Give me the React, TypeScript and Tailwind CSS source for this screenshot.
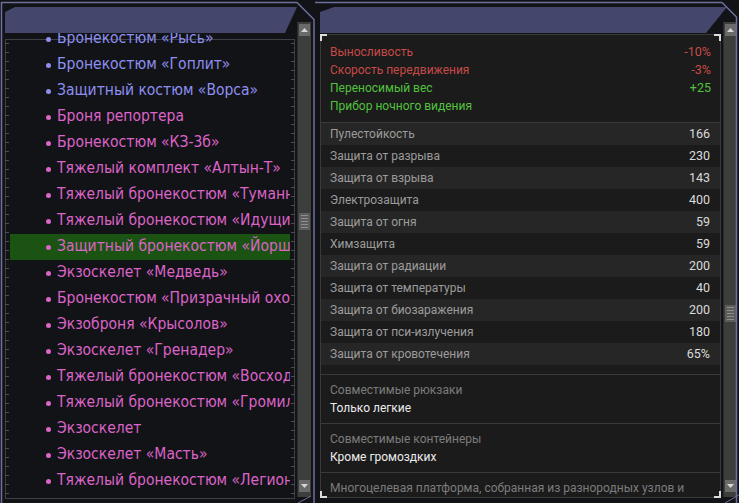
import React from "react";

type Item = { name: string; blue?: boolean; selected?: boolean };

const items: Item[] = [
  { name: "Бронекостюм «Рысь»", blue: true },
  { name: "Бронекостюм «Гоплит»", blue: true },
  { name: "Защитный костюм «Ворса»", blue: true },
  { name: "Броня репортера" },
  { name: "Бронекостюм «КЗ-3б»" },
  { name: "Тяжелый комплект «Алтын-Т»" },
  { name: "Тяжелый бронекостюм «Туманность»" },
  { name: "Тяжелый бронекостюм «Идущий»" },
  { name: "Защитный бронекостюм «Йорш»", selected: true },
  { name: "Экзоскелет «Медведь»" },
  { name: "Бронекостюм «Призрачный охотник»" },
  { name: "Экзоброня «Крысолов»" },
  { name: "Экзоскелет «Гренадер»" },
  { name: "Тяжелый бронекостюм «Восход»" },
  { name: "Тяжелый бронекостюм «Громила»" },
  { name: "Экзоскелет" },
  { name: "Экзоскелет «Масть»" },
  { name: "Тяжелый бронекостюм «Легион»" },
];

const effects = [
  { label: "Выносливость", value: "-10%", bad: true },
  { label: "Скорость передвижения", value: "-3%", bad: true },
  { label: "Переносимый вес", value: "+25" },
  { label: "Прибор ночного видения", value: "" },
];

const stats = [
  ["Пулестойкость", "166"],
  ["Защита от разрыва", "230"],
  ["Защита от взрыва", "143"],
  ["Электрозащита", "400"],
  ["Защита от огня", "59"],
  ["Химзащита", "59"],
  ["Защита от радиации", "200"],
  ["Защита от температуры", "40"],
  ["Защита от биозаражения", "200"],
  ["Защита от пси-излучения", "180"],
  ["Защита от кровотечения", "65%"],
];

function Arrow({ down }: { down?: boolean }) {
  return (
    <div className="flex h-[12px] w-[11px] items-center justify-center bg-[#6a6a6a]">
      <svg width="7" height="4" viewBox="0 0 7 4">
        <path d={down ? "M0 0 H7 L3.5 4 Z" : "M0 4 H7 L3.5 0 Z"} fill="#d6d6d6" />
      </svg>
    </div>
  );
}

function Scrollbar({ thumbTop }: { thumbTop: number }) {
  return (
    <div className="relative flex h-full w-[14px] flex-col justify-between border-l border-[#2b2c2b] bg-[#3c3e3c] pl-px pt-[2px] pb-[5px]">
      <Arrow />
      <Arrow down />
      <div
        className="absolute left-px flex h-[17px] w-[11px] flex-col justify-center gap-[2px] bg-[#5c5d5c] px-[2px]"
        style={{ top: thumbTop }}
      >
        {[0, 1, 2, 3, 4].map((i) => (
          <div key={i} className="h-px bg-[#8d8e8d]" />
        ))}
      </div>
    </div>
  );
}

function Rulers() {
  const ticks = Array.from({ length: 51 }, (_, i) => 43 + i * 9);
  return (
    <svg className="pointer-events-none absolute inset-0" width="315" height="503">
      <path d="M5 39.5 H295 M5 498.5 H295 M5.5 39 V499 M294.5 39 V499" stroke="#3e4045" fill="none" />
      {ticks.map((y) => (
        <path key={y} d={`M5 ${y + 0.5} H9 M291 ${y + 0.5} H295`} stroke="#4a4c51" />
      ))}
    </svg>
  );
}

function LeftPanel() {
  return (
    <div className="relative flex h-full w-[315px] shrink-0 bg-[#121317] pl-[5px] font-['DejaVu_Sans_Condensed','DejaVu_Sans',sans-serif]">
      <Rulers />
      <div className="relative flex w-[292px] flex-col pt-[7px]">
        <div className="h-[26px] bg-[#44466b] [clip-path:polygon(0_5px,10px_0,100%_0,calc(100%-12px)_100%,0_100%)]" />
        <div className="ml-[5px] h-[465px] w-[280px] overflow-hidden">
          <div className="-mt-[7px] flex flex-col">
            {items.map((it) => (
              <div
                key={it.name}
                className={`flex h-[26px] items-center gap-[6px] whitespace-nowrap pl-[36px] text-[15.5px] ${
                  it.blue ? "text-[#8e8ff0]" : "text-[#dc64c9]"
                } ${it.selected ? "bg-[#1b5312]" : ""}`}
              >
                <span className={`size-[5px] shrink-0 rounded-full ${it.blue ? "bg-[#8e8ff0]" : "bg-[#dc64c9]"}`} />
                <span>{it.name}</span>
              </div>
            ))}
          </div>
        </div>
      </div>
      <div className="relative pt-[22px] pb-[6px]">
        <Scrollbar thumbTop={191} />
      </div>
      <svg className="pointer-events-none absolute inset-0" width="315" height="503">
        <path d="M1.5 503 V2.5 H297 L314 19.5 V503" fill="none" stroke="#6c709c" strokeWidth="1.5" />
        <path d="M298 503 L311 496" stroke="#6c709c" />
      </svg>
    </div>
  );
}

function Corner({ pos }: { pos: string }) {
  return <div className={`absolute size-[7px] border-[#dcdcdc] ${pos}`} />;
}

function RightPanel() {
  return (
    <div className="relative flex h-full flex-1 bg-[#121317] pl-[5px] font-['Roboto',sans-serif] text-[12px]">
      <div className="relative flex w-[402px] flex-col pt-[7px]">
        <div className="mr-[-5px] h-[26px] bg-[#44466b] [clip-path:polygon(0_5px,14px_0,100%_0,calc(100%-21px)_100%,0_100%)]" />
        <div className="relative mt-px h-[464px] w-[401px] border border-[#3a3a3a] bg-[#1b1b1b]">
          <div className="h-full overflow-hidden">
            <div className="flex flex-col border-b border-[#3a3a3a] px-[9px] pt-[8px] pb-[7px] leading-[18px]">
              {effects.map((e) => (
                <div
                  key={e.label}
                  className={`flex justify-between ${e.bad ? "text-[#c64a48]" : "text-[#52c23d]"}`}
                >
                  <span>{e.label}</span>
                  <span className="text-[12.5px]">{e.value}</span>
                </div>
              ))}
            </div>
            <div className="flex flex-col pb-[9px]">
              {stats.map(([label, value], i) => (
                <div
                  key={label}
                  className={`flex h-[22px] items-center justify-between pl-[9px] pr-[10px] ${
                    i % 2 === 0 ? "bg-[#262626]" : ""
                  }`}
                >
                  <span className="text-[#9c9c9c]">{label}</span>
                  <span className="text-[12.5px] text-[#dadada]">{value}</span>
                </div>
              ))}
            </div>
            <div className="flex flex-col border-t border-b border-[#3a3a3a] px-[9px] pt-[6px] pb-[6px] leading-[18px]">
              <span className="text-[#7c7c7c]">Совместимые рюкзаки</span>
              <span className="text-[#ececec]">Только легкие</span>
            </div>
            <div className="flex flex-col border-b border-[#3a3a3a] px-[9px] pt-[6px] pb-[6px] leading-[18px]">
              <span className="text-[#7c7c7c]">Совместимые контейнеры</span>
              <span className="text-[#ececec]">Кроме громоздких</span>
            </div>
            <div className="px-[9px] pt-[6px] leading-[18px] text-[#7c7c7c]">
              Многоцелевая платформа, собранная из разнородных узлов и деталей, которые сами по себе не
              представляют ценности.
            </div>
          </div>
          <Corner pos="-left-px -top-px border-l-2 border-t-2" />
          <Corner pos="-right-px -top-px border-r-2 border-t-2" />
          <Corner pos="-left-px -bottom-px border-l-2 border-b-2" />
          <Corner pos="-right-px -bottom-px border-r-2 border-b-2" />
        </div>
      </div>
      <div className="relative ml-[1px] pt-[22px] pb-[6px]">
        <Scrollbar thumbTop={283} />
      </div>
      <svg className="pointer-events-none absolute inset-0" width="424" height="503">
        <path d="M0 2.5 H407 L421.5 17 V503" fill="none" stroke="#6c709c" strokeWidth="1.5" />
        <path d="M410 503 L424 495" stroke="#6c709c" />
      </svg>
    </div>
  );
}

export default function App() {
  return (
    <div className="flex h-[503px] w-[739px] overflow-hidden bg-[#0e0f12]">
      <LeftPanel />
      <RightPanel />
    </div>
  );
}
